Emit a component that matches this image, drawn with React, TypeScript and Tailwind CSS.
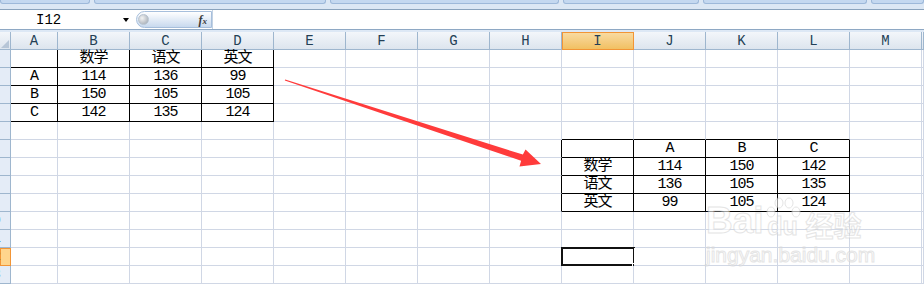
import React from 'react';

const COLS = ['A', 'B', 'C', 'D', 'E', 'F', 'G', 'H', 'I', 'J', 'K', 'L', 'M', ''];
const ROWS = 13;

// cell contents keyed by "row-col" (row 1-based, col 0 = A)
const values: Record<string, string> = {};
const put = (row: number, col: number, items: string[]) =>
  items.forEach((v, i) => {
    values[`${row}-${col + i}`] = v;
  });

put(1, 0, ['', '数学', '语文', '英文']);
put(2, 0, ['A', '114', '136', '99']);
put(3, 0, ['B', '150', '105', '105']);
put(4, 0, ['C', '142', '135', '124']);

put(6, 8, ['', 'A', 'B', 'C']);
put(7, 8, ['数学', '114', '150', '142']);
put(8, 8, ['语文', '136', '105', '135']);
put(9, 8, ['英文', '99', '105', '124']);

const inTable = (r: number, c: number) =>
  (r >= 1 && r <= 4 && c >= 0 && c <= 3) || (r >= 6 && r <= 9 && c >= 8 && c <= 11);

const SEL_ROW = 12;
const SEL_COL = 8;

function TopStrip() {
  const tabs = ['w-[90px]', 'w-[232px]', 'w-[229px]', 'w-[136px]', 'w-[164px]', 'flex-1'];
  return (
    <div className="h-[10px] bg-[#dce7f4] border-b border-[#8aa3bd]">
      <div className="flex h-[4px] gap-[4px]">
        {tabs.map((w, i) => (
          <div
            key={i}
            className={`${w} bg-[#c4d8f0] border border-t-0 border-[#9db8d9] rounded-b-[3px]`}
          />
        ))}
      </div>
    </div>
  );
}

function FormulaBar() {
  return (
    <div className="flex h-[20px] bg-white border-b border-[#8ea8c4]">
      {/* name box */}
      <div className="relative w-[136px] flex items-center">
        <span className="ml-[36px] text-[14px] leading-none text-black font-['Liberation_Mono',monospace]">
          I12
        </span>
        <span className="absolute left-[123px] top-[8px] w-0 h-0 border-l-[3px] border-r-[3px] border-t-[4px] border-l-transparent border-r-transparent border-t-black" />
      </div>
      {/* fx button */}
      <div className="my-[1px] w-[76px] flex items-center justify-between rounded-l-full border border-[#a7bfdc] bg-linear-to-b from-white to-[#c8d9ee] pl-[1px] pr-[4px]">
        <span className="w-[11px] h-[11px] rounded-full bg-radial-[at_35%_35%] from-[#f4f4f4] to-[#9aa3ad] border border-[#b7c3d0]" />
        <span className="text-[12px] leading-none italic font-bold text-[#3b3b3b] font-['Liberation_Serif',serif]">
          f<span className="text-[9px]">x</span>
        </span>
      </div>
      <div className="flex-1 border-l border-[#c3d2e3]" />
    </div>
  );
}

function Watermark() {
  const stroke = "text-white [-webkit-text-stroke:1px_#d4d4d4]";
  return (
    <div className="pointer-events-none absolute left-[706px] top-[197px] opacity-60">
      <div className="flex items-end h-[42px]">
        <span className={`${stroke} text-[37px] leading-none font-bold font-['Liberation_Sans',sans-serif]`}>
          Bai
        </span>
        <div className="relative w-[38px] h-[42px] flex items-end justify-center">
          <svg className="absolute left-0 top-0" width="38" height="26" viewBox="0 0 38 26">
            <g fill="white" stroke="#d4d4d4" strokeWidth="1">
              <ellipse cx="7" cy="15" rx="4" ry="5" />
              <ellipse cx="15" cy="6" rx="4" ry="5" />
              <ellipse cx="25" cy="6" rx="4" ry="5" />
              <ellipse cx="32" cy="15" rx="4" ry="5" />
            </g>
          </svg>
          <span className={`${stroke} text-[25px] leading-none font-bold font-['Liberation_Sans',sans-serif]`}>
            du
          </span>
        </div>
        <span className={`${stroke} ml-[4px] text-[28px] leading-none font-bold font-['Noto_Sans_CJK_SC',sans-serif]`}>
          经验
        </span>
      </div>
      <div className={`${stroke} mt-[5px] text-[21px] leading-none font-['Liberation_Sans',sans-serif]`}>
        jingyan.baidu.com
      </div>
    </div>
  );
}

function Arrow() {
  return (
    <svg className="pointer-events-none absolute left-0 top-0" width="924" height="285">
      <polygon
        points="285.2,79.4 522.9,154.6 525.5,149.6 541,164 519.5,166.4 521.1,160.8 284.8,80.6"
        fill="#ff3b3b"
      />
    </svg>
  );
}

function Sheet() {
  const cells: React.ReactNode[] = [];

  // header row
  cells.push(
    <div
      key="corner"
      className="relative border-r border-b border-[#9eb6ce] bg-linear-to-b from-[#f3f6fa] to-[#dde5ee]"
    >
      <span className="absolute right-[1px] bottom-[1px] w-0 h-0 [border-bottom:8px_solid_#b7c6d7] [border-left:8px_solid_transparent]" />
    </div>
  );
  COLS.forEach((name, c) => {
    const sel = c === SEL_COL;
    cells.push(
      <div
        key={`h-${c}`}
        className={`flex items-center justify-center border-r border-b text-[14px] leading-none font-['Liberation_Mono',monospace] ${
          sel
            ? 'border-[#f29536] bg-linear-to-b from-[#f9dca4] to-[#f1c061] text-[#233f55] shadow-[inset_1px_1px_0_#f29536]'
            : 'border-[#9eb6ce] bg-linear-to-b from-[#f3f6fa] to-[#dde5ee] text-[#233f55]'
        }`}
      >
        {name}
      </div>
    );
  });

  for (let r = 1; r <= ROWS; r++) {
    const selRow = r === SEL_ROW;
    cells.push(
      <div
        key={`r-${r}`}
        className={`relative overflow-hidden border-r border-b ${
          selRow
            ? 'bg-[#ffd58d] border-[#f29536] shadow-[inset_1px_1px_0_#f29536]'
            : 'bg-[#e4ecf7] border-[#9eb6ce]'
        }`}
      >
        <span className="absolute left-[-22px] top-0 w-[30px] text-center text-[13px] leading-[17px] text-[#233f55] font-['Liberation_Mono',monospace]">
          {r}
        </span>
      </div>
    );
    COLS.forEach((_, c) => {
      const right = inTable(r, c) || inTable(r, c + 1);
      const bottom = inTable(r, c) || inTable(r + 1, c);
      const text = values[`${r}-${c}`];
      const isSel = r === SEL_ROW && c === SEL_COL;
      cells.push(
        <div
          key={`c-${r}-${c}`}
          className={`relative flex items-end justify-center border-r border-b bg-white text-black text-[15px] leading-[16px] tracking-[-1px] font-['Liberation_Mono','Noto_Sans_CJK_SC',monospace] ${
            right ? 'border-r-black' : 'border-r-[#d0d7e5]'
          } ${bottom ? 'border-b-black' : 'border-b-[#d0d7e5]'}`}
        >
          {text}
          {isSel && (
            <span className="absolute left-[-1px] top-[-1px] w-[74px] h-[19px] border-2 border-[#111]">
              <span className="absolute right-[-4px] bottom-[-4px] w-[5px] h-[5px] bg-[#111] border border-white" />
            </span>
          )}
        </div>
      );
    });
  }

  return (
    <div className="grid grid-cols-[11px_47px_repeat(12,72px)_1fr] auto-rows-[18px]">{cells}</div>
  );
}

export default function App() {
  return (
    <div className="relative w-[924px] h-[285px] overflow-hidden bg-white">
      <TopStrip />
      <FormulaBar />
      <div className="h-[2px] bg-[#dde8f5]" />
      <Sheet />
      <Arrow />
      <Watermark />
    </div>
  );
}
